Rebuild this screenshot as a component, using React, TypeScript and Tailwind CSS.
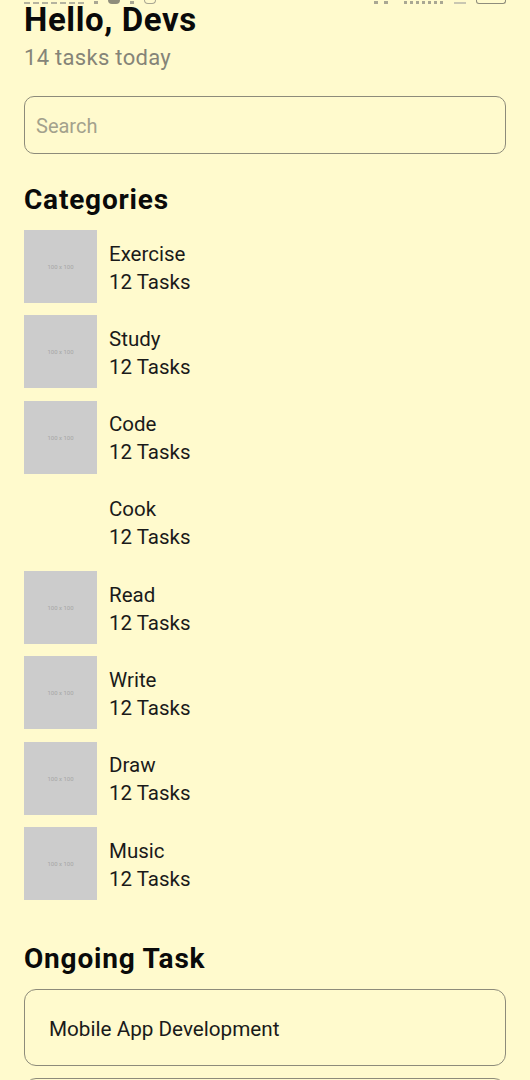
import React from "react";

// Category list shown in the home screen
type Category = {
  name: string;
  tasks: number;
  image: boolean;
};

const categories: Category[] = [
  { name: "Exercise", tasks: 12, image: true },
  { name: "Study", tasks: 12, image: true },
  { name: "Code", tasks: 12, image: true },
  { name: "Cook", tasks: 12, image: false },
  { name: "Read", tasks: 12, image: true },
  { name: "Write", tasks: 12, image: true },
  { name: "Draw", tasks: 12, image: true },
  { name: "Music", tasks: 12, image: true },
];

const ongoing = ["Mobile App Development", "Web Development"];

// only the bottom edge of the phone status bar peeks in at the top
function StatusBar() {
  return (
    <div className="flex h-[4px] items-end justify-between overflow-hidden px-[24px]">
      <div className="flex items-end gap-[10px]">
        <span className="h-[2px] w-[60px] bg-[repeating-linear-gradient(90deg,#b5b39f_0_6px,transparent_6px_9px)]" />
        <span className="h-[3px] w-[4px] bg-[#a9a793]" />
        <span className="h-[4px] w-[12px] rounded-b-full bg-[#8f8d7c]" />
        <span className="h-[3px] w-[4px] bg-[#a9a793]" />
        <span className="h-[4px] w-[12px] rounded-b-full border border-t-0 border-[#a9a793]" />
      </div>
      <div className="flex items-end gap-[10px]">
        <span className="h-[3px] w-[20px] bg-[repeating-linear-gradient(90deg,#a9a793_0_4px,transparent_4px_10px)]" />
        <span className="h-[3px] w-[40px] bg-[repeating-linear-gradient(90deg,#a9a793_0_3px,transparent_3px_6px)]" />
        <span className="h-[2px] w-[12px] bg-[#c9c7b2]" />
        <span className="h-[4px] w-[30px] rounded-b-[3px] border border-t-0 border-[#8f8d7c]" />
      </div>
    </div>
  );
}

function Thumb() {
  return (
    <div className="flex h-[73px] w-[73px] shrink-0 items-center justify-center bg-[#cccccc] text-[6px] text-[#a6a6a6]">
      100 x 100
    </div>
  );
}

export default function App() {
  return (
    <div
      className="relative min-h-screen overflow-hidden bg-[#fffacd] text-[#1a1a1a]"
      style={{ fontFamily: "Roboto, 'Noto Sans', sans-serif" }}
    >
      <StatusBar />
      <div className="px-[24px]">
        <h1 className="-mt-[3px] text-[33px] font-bold leading-[37px] tracking-[0.6px] text-[#0a0a0a]">
          Hello, Devs
        </h1>
        <p className="mt-[6px] text-[22px] leading-[28px] tracking-[0.3px] text-[#858478]">14 tasks today</p>

        <input
          type="text"
          placeholder="Search"
          className="mt-[24px] h-[58px] w-full rounded-[10px] border border-[#8d8b7a] bg-transparent px-[11px] pt-[2px] text-[20px] outline-none placeholder:text-[#a3a18c]"
        />

        <h2 className="mt-[29px] text-[28px] font-bold leading-[34px] tracking-[0.8px] text-[#0a0a0a]">Categories</h2>
        <div className="mt-[13px] flex flex-col gap-[12.3px]">
          {categories.map((c) => (
            <div key={c.name} className="flex h-[73px] items-center gap-[12px]">
              {c.image ? <Thumb /> : <div className="h-[73px] w-[73px] shrink-0" />}
              <div className="pt-[2px] text-[20.5px] leading-[28px]">
                <div>{c.name}</div>
                <div>{c.tasks} Tasks</div>
              </div>
            </div>
          ))}
        </div>

        <h2 className="mt-[42px] text-[28px] font-bold leading-[34px] tracking-[0.8px] text-[#0a0a0a]">
          Ongoing Task
        </h2>
        <div className="mt-[13px] flex flex-col gap-[12px]">
          {ongoing.map((t) => (
            <div
              key={t}
              className="flex h-[77px] items-center rounded-[12px] border border-[#8d8b7a] px-[24px] pt-[2px] text-[20.7px] leading-[28px]"
            >
              {t}
            </div>
          ))}
        </div>
      </div>
    </div>
  );
}
